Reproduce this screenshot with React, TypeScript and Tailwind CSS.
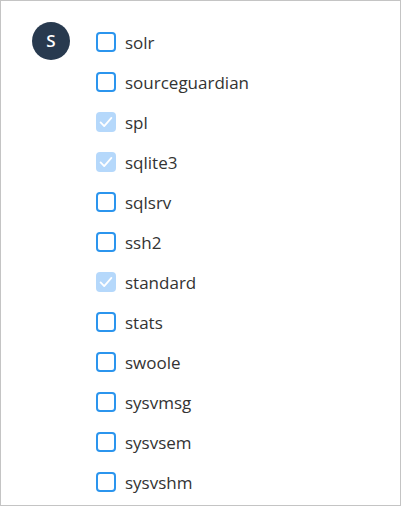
const items: { name: string; checked?: boolean }[] = [
  { name: "solr" },
  { name: "sourceguardian" },
  { name: "spl", checked: true },
  { name: "sqlite3", checked: true },
  { name: "sqlsrv" },
  { name: "ssh2" },
  { name: "standard", checked: true },
  { name: "stats" },
  { name: "swoole" },
  { name: "sysvmsg" },
  { name: "sysvsem" },
  { name: "sysvshm" },
];

function Box({ checked }: { checked?: boolean }) {
  if (checked) {
    return (
      <span className="grid h-5 w-5 shrink-0 place-items-center rounded-[4px] bg-[#b5d8fb]">
        <svg viewBox="0 0 20 20" className="h-[18px] w-[18px]" fill="none" stroke="white" strokeWidth={2} strokeLinecap="round" strokeLinejoin="round">
          <path d="M4 10.5l4 4 8-9" />
        </svg>
      </span>
    );
  }
  return <span className="h-5 w-5 shrink-0 rounded-[4px] border-2 border-[#2b95ee] bg-white" />;
}

export default function App() {
  return (
    <div className="h-[506px] w-[401px] border border-[#c4c4c4] bg-white font-['Open_Sans',sans-serif] text-[#333]">
      <div className="flex gap-[26px] pl-[31px] pt-[21px]">
        <div className="grid h-[38px] w-[38px] place-items-center rounded-full bg-[#283a4f] text-[17px] font-semibold text-white">
          S
        </div>
        <ul className="flex flex-col">
          {items.map((it) => (
            <li key={it.name} className="flex h-10 items-center gap-[9px] text-[17px]">
              <Box checked={it.checked} />
              <span className="leading-none">{it.name}</span>
            </li>
          ))}
        </ul>
      </div>
    </div>
  );
}
